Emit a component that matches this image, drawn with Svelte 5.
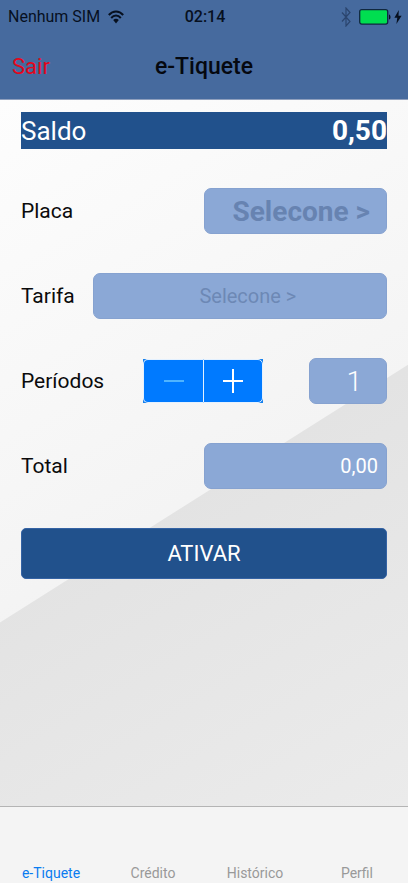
<script lang="ts">
	const tabs = ['e-Tiquete', 'Crédito', 'Histórico', 'Perfil'];

	let activeTab = $state('e-Tiquete');
	let periods = $state(1);
</script>

<div class="screen">
	<header>
		<div class="status">
			<span class="carrier">
				Nenhum SIM
				<svg class="wifi" viewBox="0 0 16 14" aria-hidden="true">
					<path d="M.8 5C5 .2 11 .2 15.2 5" />
					<path d="M3.2 8c2.8-3.2 6.8-3.2 9.6 0" />
					<path class="solid" d="M5.2 10.1c1.7-1.7 3.9-1.7 5.6 0L8 13.6z" />
				</svg>
			</span>
			<span class="time">02:14</span>
			<span class="power">
				<svg class="bluetooth" viewBox="0 0 10 20" aria-hidden="true">
					<path d="M1 5.5l8 9L5 19V1l4 4.5-8 9" />
				</svg>
				<svg class="battery" viewBox="0 0 32 16" aria-hidden="true">
					<rect x="0.7" y="0.7" width="28" height="14.4" rx="2" />
					<path d="M30 5.4c2 .6 2 4.6 0 5.2z" />
				</svg>
				<svg class="bolt" viewBox="0 0 8 14" aria-hidden="true">
					<path d="M4.8 0L.4 7.8h2.9L2.4 14l5.2-8.3H4.5z" />
				</svg>
			</span>
		</div>
		<nav class="navbar">
			<button class="logout" type="button">Sair</button>
			<h1>e-Tiquete</h1>
		</nav>
	</header>

	<main>
		<div class="balance">
			<span>Saldo</span>
			<strong>0,50</strong>
		</div>

		<div class="row">
			<label for="plate">Placa</label>
			<button id="plate" class="field half plate" type="button">Selecone &gt;</button>
		</div>

		<div class="row">
			<label for="rate">Tarifa</label>
			<button id="rate" class="field rate" type="button">Selecone &gt;</button>
		</div>

		<div class="row">
			<label for="periods">Períodos</label>
			<div class="stepper">
				<button
					type="button"
					aria-label="Menos"
					disabled={periods <= 1}
					onclick={() => (periods -= 1)}
				>
					<svg viewBox="0 0 24 24" aria-hidden="true"><path d="M2 12h20" /></svg>
				</button>
				<button type="button" aria-label="Mais" onclick={() => (periods += 1)}>
					<svg viewBox="0 0 24 24" aria-hidden="true"><path d="M2 12h20M12 0v24" /></svg>
				</button>
			</div>
			<input id="periods" class="field count" type="text" readonly value={periods} />
		</div>

		<div class="row">
			<label for="total">Total</label>
			<input id="total" class="field half total" type="text" readonly value="0,00" />
		</div>

		<button class="activate" type="button">ATIVAR</button>
	</main>

	<nav class="tabs">
		{#each tabs as tab (tab)}
			<button type="button" class:active={tab === activeTab} onclick={() => (activeTab = tab)}>
				{tab}
			</button>
		{/each}
	</nav>
</div>

<style>
	:global(body) {
		margin: 0;
	}

	.screen {
		display: flex;
		flex-direction: column;
		min-height: 100vh;
		font-family: Roboto, 'Liberation Sans', sans-serif;
		color: #0b0b0c;
	}

	button,
	input {
		box-sizing: border-box;
		margin: 0;
		padding: 0;
		border: 0;
		font-family: inherit;
	}

	button {
		cursor: pointer;
	}

	header {
		background: #466a9e;
		border-bottom: 1px solid #8f9fbd;
	}

	.status {
		display: grid;
		grid-template-columns: 1fr auto 1fr;
		align-items: center;
		height: 33px;
		padding: 0 6px 0 8px;
		font-size: 16px;
		color: #07101f;
	}

	.carrier,
	.power {
		display: flex;
		align-items: center;
	}

	.carrier {
		gap: 8px;
		white-space: nowrap;
	}

	.time {
		font-weight: 500;
	}

	.power {
		justify-content: flex-end;
	}

	.wifi {
		width: 16px;
		height: 14px;
		fill: none;
		stroke: #07101f;
		stroke-width: 2;
	}

	.wifi .solid {
		fill: #07101f;
		stroke: none;
	}

	.bluetooth {
		width: 10px;
		height: 20px;
		margin-right: 8px;
		fill: none;
		stroke: #2b456e;
		stroke-width: 1.2;
	}

	.battery {
		width: 32px;
		height: 16px;
		margin-right: 3px;
		fill: #07101f;
	}

	.battery rect {
		fill: #00de50;
		stroke: #10283f;
		stroke-width: 1.3;
	}

	.bolt {
		width: 8px;
		height: 14px;
		fill: #07101f;
	}

	.navbar {
		display: grid;
		grid-template-columns: 1fr auto 1fr;
		align-items: center;
		height: 66px;
		padding: 0 12px;
	}

	.logout {
		justify-self: start;
		background: none;
		color: #e3061c;
		font-size: 22px;
	}

	h1 {
		margin: 0;
		font-size: 23px;
		font-weight: 500;
		color: #05080f;
	}

	main {
		position: relative;
		z-index: 0;
		flex: 1;
		display: flex;
		flex-direction: column;
		gap: 39px;
		padding: 12px 21px 24px;
		background: linear-gradient(150deg, #fdfdfd, #f3f3f3 60%);
	}

	/* darker diagonal half of the backdrop */
	main::before {
		content: '';
		position: absolute;
		inset: 0;
		z-index: -1;
		background: linear-gradient(150deg, #dfdfdf 30%, #ebebeb);
		clip-path: polygon(0 74%, 100% 37.5%, 100% 100%, 0 100%);
	}

	.balance {
		display: flex;
		justify-content: space-between;
		align-items: center;
		height: 37px;
		background: #21518c;
		color: #fff;
		font-size: 26px;
	}

	.balance strong {
		font-size: 28px;
	}

	.row {
		display: flex;
		align-items: center;
		justify-content: space-between;
		gap: 18px;
	}

	label {
		font-size: 21px;
	}

	.field {
		height: 46px;
		border: 1px solid #86a2d0;
		border-radius: 7px;
		background: #8ba8d6;
		color: #fff;
	}

	.half {
		width: 50%;
	}

	.plate {
		padding-right: 16px;
		text-align: right;
		font-size: 28px;
		font-weight: 700;
		color: #6783b1;
	}

	.rate {
		flex: 1;
		padding-left: 16px;
		font-size: 20px;
		color: #6d88b5;
	}

	/* the square blue box shows behind the rounded white outline */
	.stepper {
		display: flex;
		height: 44px;
		margin-left: auto;
		margin-right: 28px;
		background: #1680ec;
	}

	.stepper button {
		display: grid;
		place-items: center;
		width: 60px;
		border: 1px solid #e4f1ff;
		background: #007aff;
	}

	.stepper button:first-child {
		border-right: 0;
		border-radius: 5px 0 0 5px;
	}

	.stepper button:last-child {
		border-radius: 0 5px 5px 0;
	}

	.stepper svg {
		width: 24px;
		height: 24px;
		fill: none;
		stroke: #fff;
		stroke-width: 2;
	}

	.stepper button:disabled svg {
		stroke: #4fb4ff;
	}

	.count {
		width: 78px;
		padding-right: 24px;
		text-align: right;
		font-size: 28px;
		font-weight: 300;
	}

	.total {
		padding-right: 8px;
		text-align: right;
		font-size: 20px;
	}

	.activate {
		height: 51px;
		border: 1px solid #3563a4;
		border-radius: 5px;
		background: #21518c;
		color: #fff;
		font-size: 22px;
	}

	.tabs {
		display: grid;
		grid-template-columns: repeat(4, 1fr);
		height: 76px;
		border-top: 1px solid #b4b4b4;
		background: #f4f4f4;
	}

	.tabs button {
		display: flex;
		align-items: flex-end;
		justify-content: center;
		padding-bottom: 2px;
		background: none;
		color: #999;
		font-size: 14px;
	}

	.tabs .active {
		color: #0a7cf0;
	}
</style>
